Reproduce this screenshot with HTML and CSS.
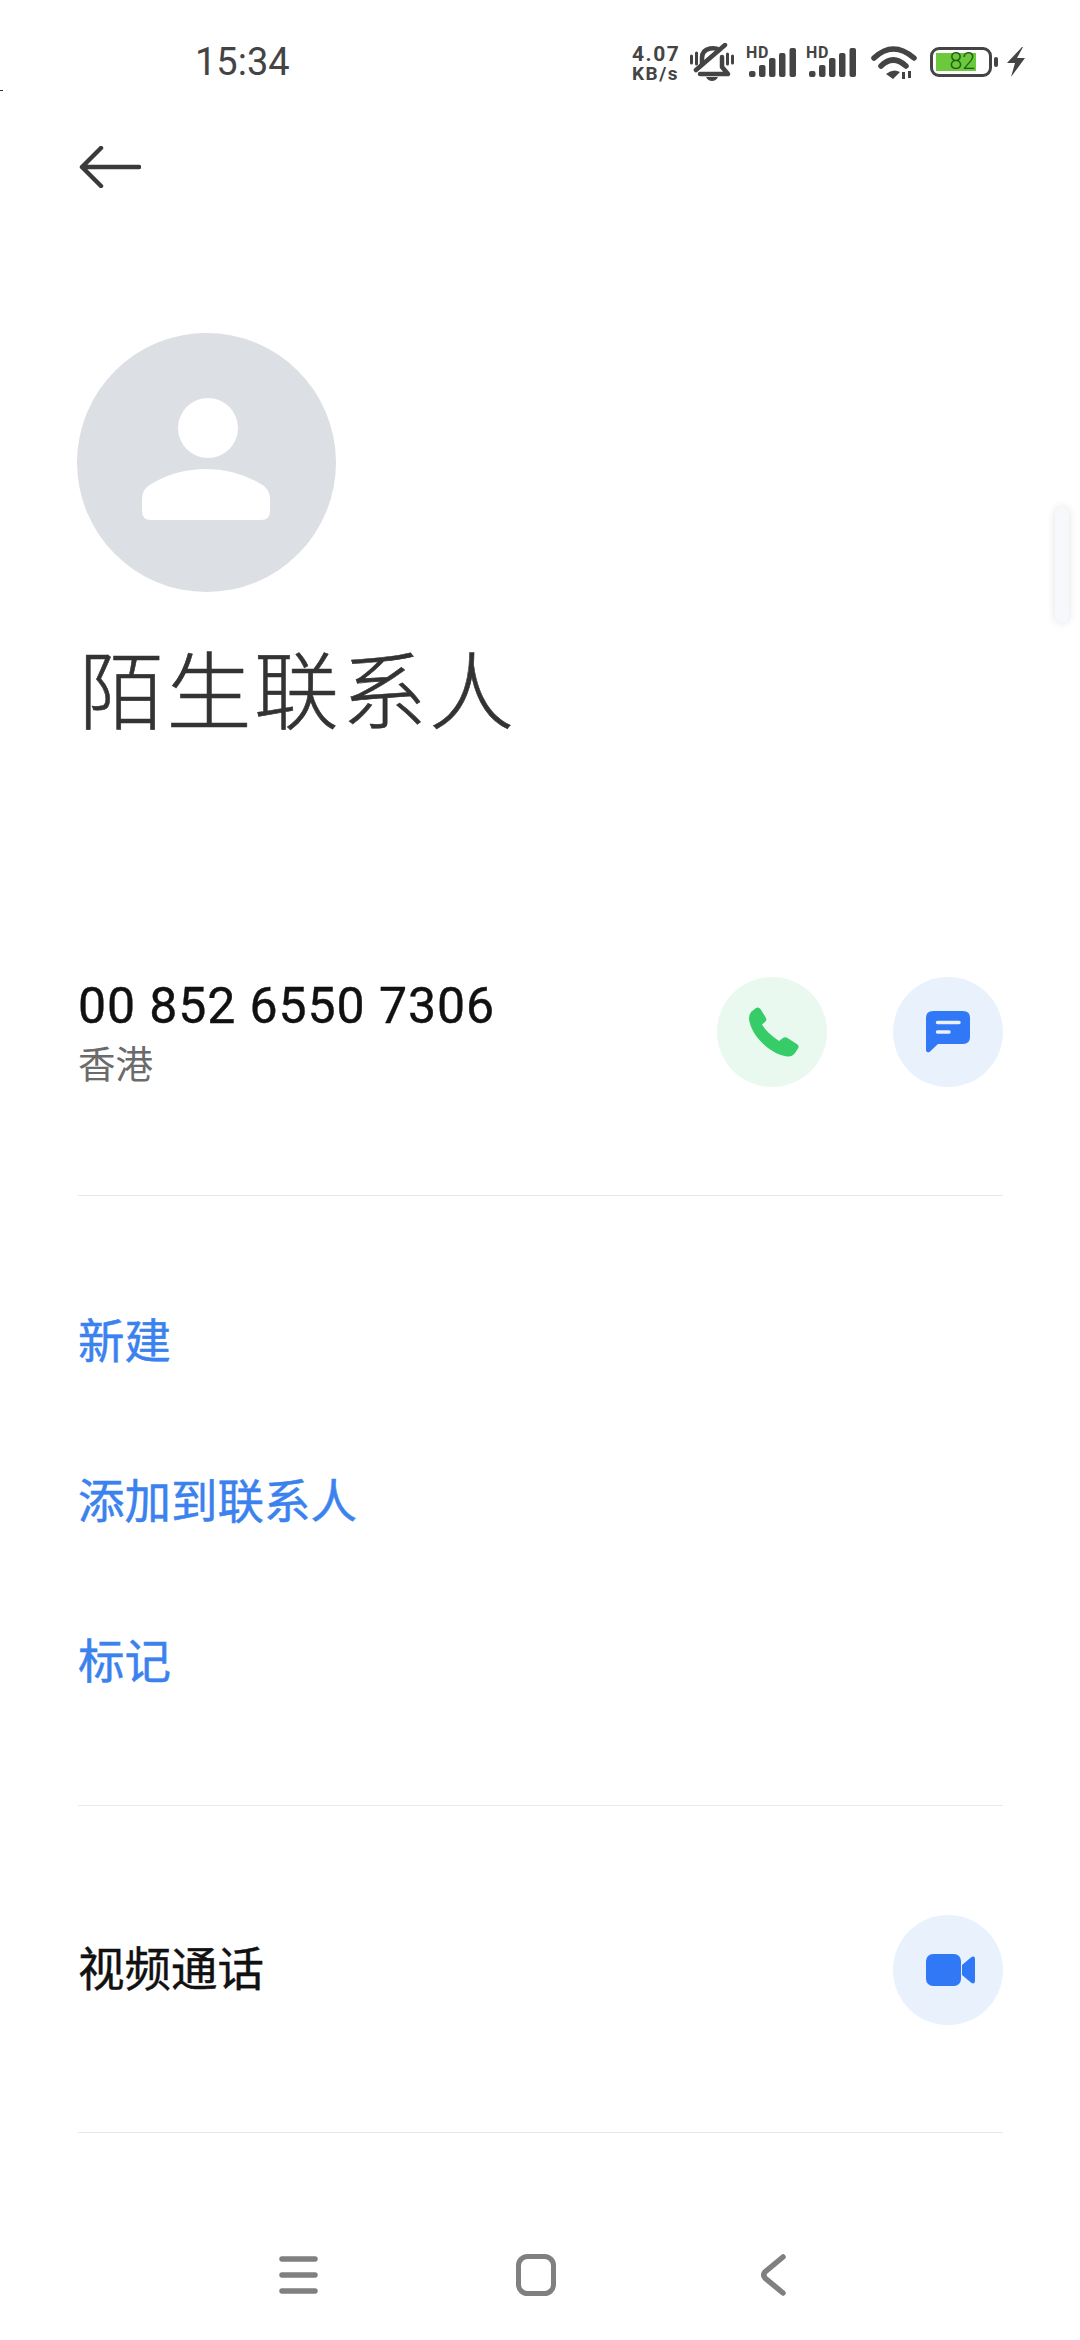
FILE: index.html
```html
<!DOCTYPE html>
<html lang="zh-CN">
<head>
    <meta charset="UTF-8">
    <meta name="viewport" content="width=device-width, initial-scale=1.0">
    <title>陌生联系人</title>
    <link rel="stylesheet" href="styles.css">
</head>
<body>
    <div class="screen">
        <span class="speck"></span>
        <div class="scroll-thumb"></div>

        <!-- status bar -->
        <div class="status-bar">
            <span class="time">15:34</span>
            <div class="status-icons">
                <div class="speed"><span>4.07</span><span>KB/s</span></div>
                <svg class="ic-bell" width="44" height="38" viewBox="0 0 44 38">
                    <g fill="none" stroke="#444" stroke-width="4.500" stroke-linecap="round" stroke-linejoin="round">
                        <path d="M12 21V15Q12 7 20 5.500Q26 4.500 29 7"/>
                        <path d="M32 14V24L38 31H10"/>
                        <path d="M6 27L35 2"/>
                        <path d="M1.500 13V20M6.500 10V21M37.500 11V21M42.500 13V20" stroke-width="3"/>
                    </g>
                    <path d="M16 34H28Q26 38 22 38Q18 38 16 34Z" fill="#444"/>
                </svg>
                <svg class="ic-signal" width="50" height="39" viewBox="0 -4 50 39">
                    <text x="0" y="10.500" class="hd">HD</text>
                    <rect x="3" y="24" width="6.500" height="6" rx="2" fill="#444"/>
                    <rect x="13" y="18" width="6.500" height="12" rx="2" fill="#444"/>
                    <rect x="23" y="11" width="6.500" height="19" rx="2" fill="#444"/>
                    <rect x="33" y="6" width="6.500" height="24" rx="2" fill="#444"/>
                    <rect x="43.500" y="1" width="6.500" height="29" rx="2" fill="#444"/>
                </svg>
                <svg class="ic-signal" width="50" height="39" viewBox="0 -4 50 39">
                    <text x="0" y="10.500" class="hd">HD</text>
                    <rect x="3" y="24" width="6.500" height="6" rx="2" fill="#444"/>
                    <rect x="13" y="18" width="6.500" height="12" rx="2" fill="#444"/>
                    <rect x="23" y="11" width="6.500" height="19" rx="2" fill="#444"/>
                    <rect x="33" y="6" width="6.500" height="24" rx="2" fill="#444"/>
                    <rect x="43.500" y="1" width="6.500" height="29" rx="2" fill="#444"/>
                </svg>
                <svg class="ic-wifi" width="46" height="34" viewBox="0 0 46 34">
                    <g fill="none" stroke="#444" stroke-width="5.500" stroke-linecap="round">
                        <path d="M3 13Q22 -5 43 13"/>
                        <path d="M10 21Q22 9 35 21"/>
                    </g>
                    <path d="M15 29Q22 23 29 27L22 34ZM31 27H34V34H31ZM37 26H40V33H37Z" fill="#444"/>
                </svg>
                <div class="battery">
                    <div class="battery-body">
                        <div class="battery-fill">82</div>
                    </div>
                    <span class="battery-nub"></span>
                </div>
                <svg class="ic-bolt" width="18" height="30" viewBox="0 0 18 30">
                    <path d="M15 0L0 16H8L4 30L18 11H10L16 0Z" fill="#444"/>
                </svg>
            </div>
        </div>

        <!-- back -->
        <div class="top-bar">
            <svg width="62" height="42" viewBox="0 0 62 42">
                <path d="M60 21H3M22 2L3 21L22 40" fill="none" stroke="#3a3a3a" stroke-width="4.500" stroke-linecap="round" stroke-linejoin="round"/>
            </svg>
        </div>

        <!-- contact -->
        <div class="avatar">
            <svg width="259" height="259" viewBox="0 0 259 259">
                <circle cx="131" cy="95" r="30" fill="#fff"/>
                <path d="M65 166Q65 155 76 150Q100 136 129 136Q158 136 182 150Q193 155 193 166V178Q193 187 184 187H74Q65 187 65 178Z" fill="#fff"/>
            </svg>
        </div>
        <h1 class="name">陌生联系人</h1>

        <div class="row phone-row">
            <div class="phone-info">
                <div class="phone-number">00 852 6550 7306</div>
                <div class="phone-region">香港</div>
            </div>
            <div class="actions">
                <div class="round-btn green">
                    <svg class="nudge" width="50" height="50" viewBox="0 0 50 50">
                        <path d="M2 5L7 1Q9.500 -.5 11.500 2L17 11Q18 13.500 16 15L13 17.500Q18 26 30 34L34 31Q36 29.500 38.500 31L48.500 37.500Q50.500 39.500 49 41.500L46 46Q43 50 38 49.500C20 47 2 28 0 12Q0 8 2 5Z" fill="#36cc68"/>
                    </svg>
                </div>
                <div class="round-btn blue">
                    <svg width="44" height="42" viewBox="0 0 44 42">
                        <path d="M7 0H37Q44 0 44 7V26Q44 33 37 33H12L3.500 41Q0 42 0 39V7Q0 0 7 0Z" fill="#3178f6"/>
                        <path d="M11.500 11.500H33M11.500 21H23" stroke="#eaf2fe" stroke-width="3.500" stroke-linecap="round"/>
                    </svg>
                </div>
            </div>
        </div>

        <div class="link-list">
            <div class="link-item">新建</div>
            <div class="link-item">添加到联系人</div>
            <div class="link-item">标记</div>
        </div>

        <div class="row video-row">
            <div class="video-label">视频通话</div>
            <div class="round-btn blue">
                <svg class="nudge" width="49" height="32" viewBox="0 0 49 32">
                    <rect width="35" height="32" rx="7" fill="#3178f6"/>
                    <path d="M36 11L45.500 3Q49 1.500 49 5V27Q49 30.500 45.500 29L36 21Z" fill="#3178f6"/>
                </svg>
            </div>
        </div>

        <!-- nav bar -->
        <div class="nav-bar">
            <svg width="39" height="38" viewBox="0 0 39 38">
                <path d="M3 3H36M3 19H36M3 35H36" stroke="#808080" stroke-width="5.500" stroke-linecap="round"/>
            </svg>
            <svg class="nav-home" width="40" height="42" viewBox="0 0 40 42">
                <rect x="2.500" y="2.500" width="35" height="37" rx="9" fill="none" stroke="#808080" stroke-width="5"/>
            </svg>
            <svg class="nav-back" width="25" height="42" viewBox="0 0 25 42">
                <path d="M22 3L4 18Q1.500 21 4 24L22 39" fill="none" stroke="#808080" stroke-width="5.500" stroke-linecap="round"/>
            </svg>
        </div>
    </div>
</body>
</html>
```

FILE: styles.css
```css
* {
    box-sizing: border-box;
}
body {
    margin: 0;
    padding: 0;
    background: #fff;
    font-family: "Noto Sans CJK SC", Roboto, sans-serif;
}
.screen {
    position: relative;
    width: 1080px;
    height: 2340px;
    overflow: hidden;
    background: #fff;
}
.speck {
    position: absolute;
    left: 0;
    top: 90px;
    width: 3px;
    height: 1px;
    background: #333;
}
.scroll-thumb {
    position: absolute;
    left: 1055px;
    top: 507px;
    width: 14px;
    height: 116px;
    border-radius: 7px;
    background: #f7f8fc;
    box-shadow: 0 0 8px rgba(0, 0, 0, 0.12);
}

/* status bar */
.status-bar {
    display: flex;
    align-items: center;
    height: 124px;
    padding: 0 55px 0 195px;
}
.time {
    font-family: Roboto, sans-serif;
    font-size: 38px;
    color: #444;
}
.status-icons {
    display: flex;
    align-items: center;
    margin-left: auto;
}
.speed {
    display: flex;
    flex-direction: column;
    width: 48px;
    margin: 3px 10px 0 0;
    font-family: Roboto, sans-serif;
    font-weight: 700;
    color: #444;
    letter-spacing: 1.500px;
    line-height: 19px;
    white-space: nowrap;
}
.speed span:first-child {
    font-size: 21px;
}
.speed span:last-child {
    font-size: 19px;
}
.ic-bell {
    margin-right: 12px;
}
.ic-signal {
    margin-right: 10px;
}
.ic-wifi {
    margin-left: 5px;
}
.hd {
    font-family: Roboto, sans-serif;
    font-size: 16px;
    font-weight: 700;
    letter-spacing: 0.8px;
    fill: #444;
}
.battery {
    display: flex;
    align-items: center;
    margin-left: 13px;
}
.battery-body {
    width: 62px;
    height: 30px;
    padding: 3px;
    border: 3.5px solid #444;
    border-radius: 9px;
}
.battery-fill {
    width: 40px;
    height: 18px;
    padding-right: 1px;
    background: #6cc93c;
    color: #1c5a10;
    font-family: Roboto, sans-serif;
    font-size: 23px;
    font-weight: 300;
    line-height: 18px;
    text-align: right;
}
.battery-nub {
    width: 4px;
    height: 10px;
    margin-left: 2px;
    border-radius: 2px;
    background: #444;
}
.ic-bolt {
    margin-left: 9px;
}

/* back */
.top-bar {
    display: flex;
    padding: 22px 0 0 79px;
}

/* contact */
.avatar {
    width: 259px;
    height: 259px;
    margin: 145px 0 0 77px;
    border-radius: 50%;
    background: #dcdfe4;
}
.avatar svg {
    display: block;
}
.name {
    margin: 44px 0 0 79px;
    font-size: 85px;
    font-weight: 300;
    letter-spacing: 2.500px;
    line-height: 100px;
    color: #333;
    -webkit-text-stroke: 0.6px #333;
}
.row {
    display: flex;
    align-items: center;
    justify-content: space-between;
    margin: 0 77px 0 78px;
    border-bottom: 1.5px solid #e8e9eb;
}
.phone-row {
    margin-top: 240px;
    padding-bottom: 107px;
}
.phone-number {
    font-family: Roboto, sans-serif;
    font-size: 50px;
    letter-spacing: 0.9px;
    line-height: 60px;
    color: #111;
    -webkit-text-stroke: 0.4px #111;
}
.phone-region {
    font-size: 37.500px;
    line-height: 52px;
    color: #6b6b6b;
}
.actions {
    display: flex;
    gap: 66px;
}
.round-btn {
    display: flex;
    align-items: center;
    justify-content: center;
    width: 110px;
    height: 110px;
    border-radius: 50%;
}
.round-btn.green {
    background: #e9f9ef;
}
.round-btn.blue {
    background: #e9f1fd;
}
.nudge {
    margin-left: 4px;
}
.link-list {
    margin: 0 77px 0 78px;
    padding: 67px 0 62px;
    border-bottom: 1.5px solid #e8e9eb;
}
.link-item {
    height: 160px;
    font-size: 46.500px;
    line-height: 150px;
    color: #3b82ee;
    -webkit-text-stroke: 0.5px #3b82ee;
}
.video-row {
    padding: 109px 0 107px;
}
.video-label {
    margin-bottom: 10px;
    font-size: 46.500px;
    color: #111;
    -webkit-text-stroke: 0.4px #111;
}

/* nav bar */
.nav-bar {
    position: absolute;
    left: 0;
    right: 0;
    bottom: 44px;
    display: flex;
    align-items: center;
    height: 42px;
    padding-left: 279px;
}
.nav-home {
    margin-left: 198px;
}
.nav-back {
    margin-left: 205px;
}
```
